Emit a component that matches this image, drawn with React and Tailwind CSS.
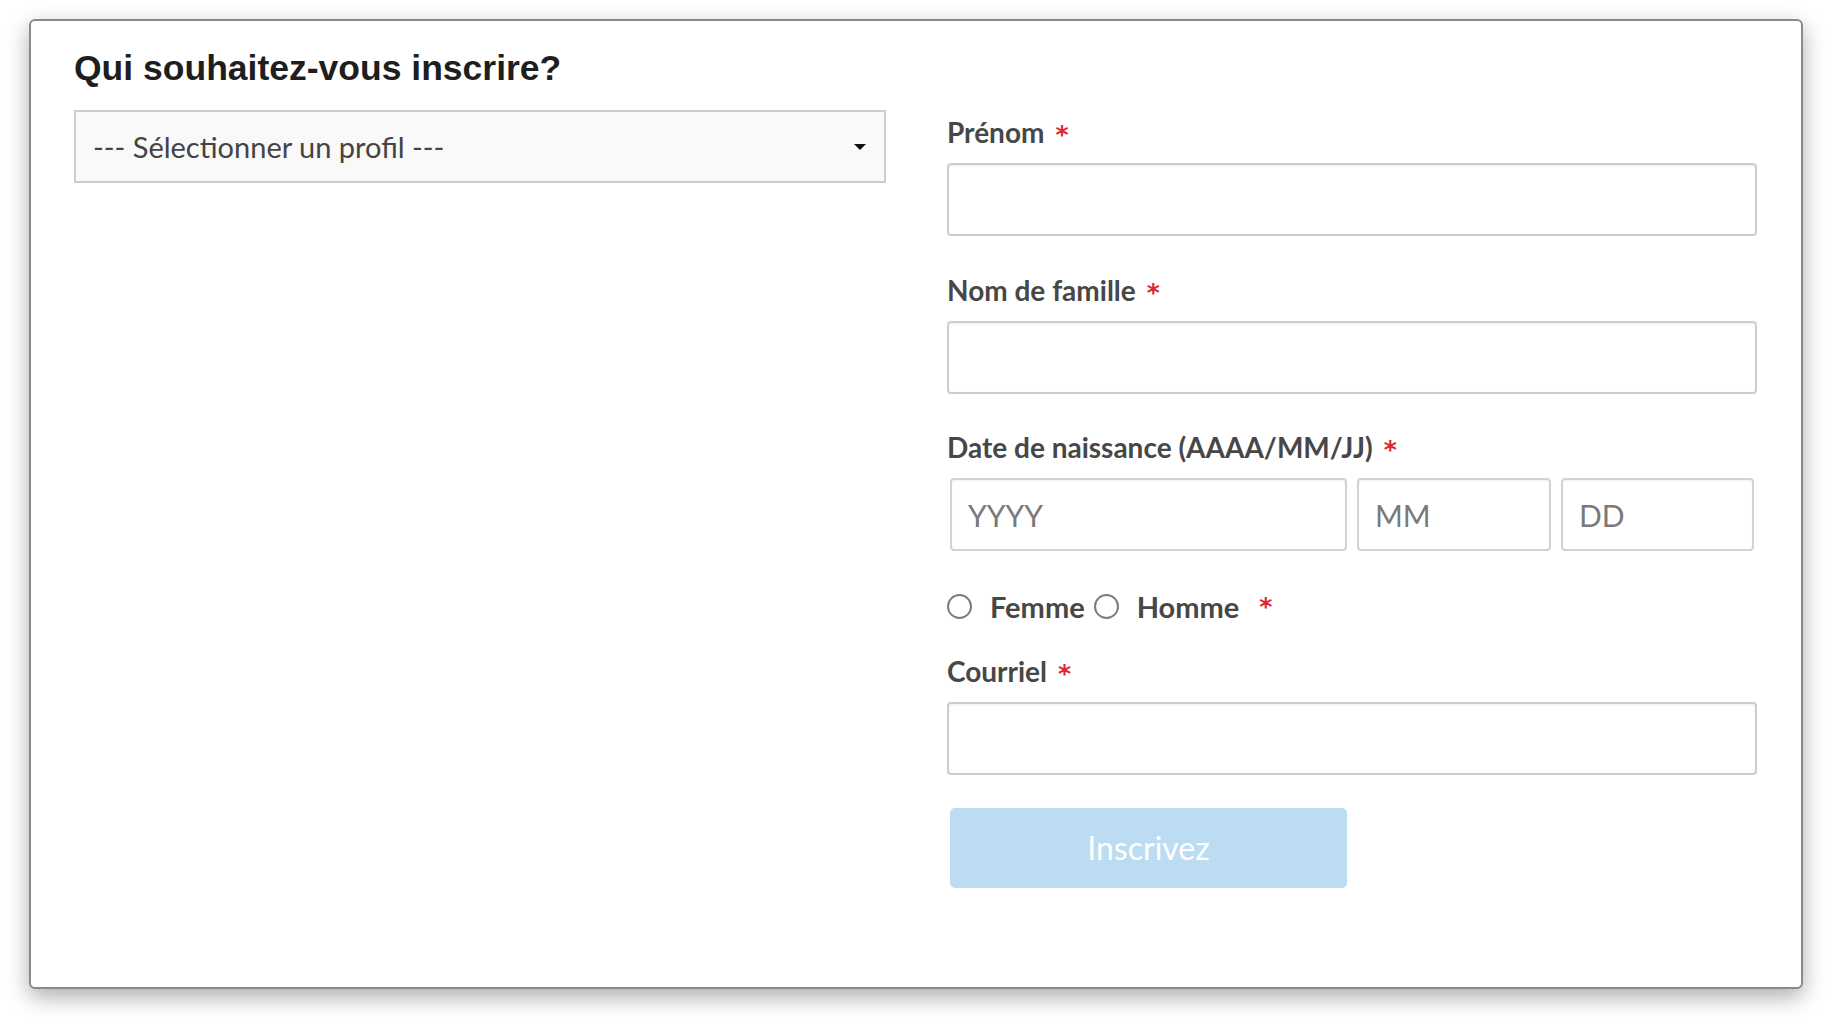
import React from "react";

const body = { fontFamily: "Lato, 'Open Sans', 'Noto Sans', sans-serif" };
const heading = { fontFamily: "'Liberation Sans', Arial, sans-serif" };
const starFont = { fontFamily: "'DejaVu Sans', sans-serif" };

function Star({ className = "ml-[11px]" }) {
  return (
    <span className={`text-[#e0262f] text-[25px] font-bold ${className}`} style={starFont}>
      *
    </span>
  );
}

function Label({ children, className = "" }) {
  return (
    <div className={`text-[28px] leading-[39px] font-bold text-[#474747] ${className}`}>
      {children}
      <Star />
    </div>
  );
}

function TextInput() {
  return (
    <input
      type="text"
      className="block w-full h-[73px] border-2 border-[#cdcdcd] rounded-[4px] bg-white px-4 text-[28px] outline-none shadow-[inset_0_1px_2px_rgba(0,0,0,0.08)]"
    />
  );
}

function DateInput({ placeholder }) {
  return (
    <input
      type="text"
      placeholder={placeholder}
      className="block w-full h-[73px] border-2 border-[#d2d2d2] rounded-[4px] bg-white px-4 text-[30px] text-[#444] placeholder:text-[#7a7a7a] outline-none shadow-[inset_0_1px_2px_rgba(0,0,0,0.06)]"
    />
  );
}

function Radio({ label }) {
  return (
    <label className="flex items-center">
      <span className="w-[25px] h-[25px] rounded-full border-2 border-[#7c7c7c] bg-white"></span>
      <span className="ml-[18px] text-[29px] leading-[39px] font-bold text-[#474747]">{label}</span>
    </label>
  );
}

export default function App() {
  return (
    <div className="min-h-[1018px] bg-white pt-[19px] pl-[29px]" style={body}>
      <div className="w-[1774px] h-[970px] bg-white border-2 border-[#8a8a8a] rounded-[6px] shadow-[0_8px_22px_rgba(0,0,0,0.33)] pt-[20px] pl-[43px] pr-[44px]">
        <div className="grid grid-cols-[812px_810px] gap-x-[61px] items-start">
          {/* profile picker */}
          <div>
            <h2 className="mt-[6px] text-[35.5px] leading-[43px] font-bold text-[#1e1e1e]" style={heading}>
              Qui souhaitez-vous inscrire?
            </h2>
            <div className="mt-[20px] h-[73px] border-2 border-[#cdcdcd] bg-[#f9f9f9] flex items-center justify-between pl-[17px] pr-[18px]">
              <span className="text-[29px] text-[#444]">--- Sélectionner un profil ---</span>
              <svg width="12" height="6" viewBox="0 0 12 6">
                <path d="M0 0 L12 0 L6 6 Z" fill="#111" />
              </svg>
            </div>
          </div>

          {/* registration form */}
          <div className="pt-[72px]">
            <Label className="mb-[9px]">Prénom</Label>
            <TextInput />

            <Label className="mt-[35px] mb-[9px]">Nom de famille</Label>
            <TextInput />

            <Label className="mt-[34px] mb-[9px]">Date de naissance (AAAA/MM/JJ)</Label>
            <div className="px-[3px] grid grid-cols-[397px_194px_193px] gap-x-[10px]">
              <DateInput placeholder="YYYY" />
              <DateInput placeholder="MM" />
              <DateInput placeholder="DD" />
            </div>

            <div className="mt-[36px] flex items-center">
              <Radio label="Femme" />
              <div className="ml-[9px]">
                <Radio label="Homme" />
              </div>
              <Star className="ml-[20px] leading-[39px]" />
            </div>

            <Label className="mt-[26px] mb-[9px]">Courriel</Label>
            <TextInput />

            <div className="mt-[33px] px-[3px]">
              <button className="w-[397px] h-[80px] rounded-[5px] bg-[#bbdcf2] text-white text-[32px]">
                Inscrivez
              </button>
            </div>
          </div>
        </div>
      </div>
    </div>
  );
}
